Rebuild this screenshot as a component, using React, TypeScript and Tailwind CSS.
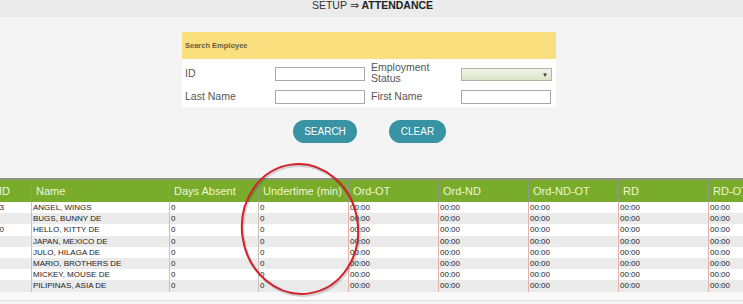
import React from 'react';

const rows = [
  { id: '13', name: 'ANGEL, WINGS' },
  { id: '', name: 'BUGS, BUNNY DE' },
  { id: '10', name: 'HELLO, KITTY DE' },
  { id: '', name: 'JAPAN, MEXICO DE' },
  { id: '', name: 'JULO, HILAGA DE' },
  { id: '', name: 'MARIO, BROTHERS DE' },
  { id: '', name: 'MICKEY, MOUSE DE' },
  { id: '', name: 'PILIPINAS, ASIA DE' },
];

const timeCols = ['Ord-OT', 'Ord-ND', 'Ord-ND-OT', 'RD', 'RD-OT'];

function Field({ className = '' }: { className?: string }) {
  return <div className={`h-[14px] border border-[#a9a9a9] bg-white ${className}`} />;
}

export default function App() {
  return (
    <div className="relative w-[743px] h-[304px] overflow-hidden bg-[#f4f4f4] font-['Liberation_Sans',Arial,sans-serif] text-[#333]">
      {/* breadcrumb */}
      <div className="h-[17px] bg-[#ebebeb] pl-[2px] text-center text-[10.5px] leading-[11px] text-[#333]">
        SETUP ⇒ <b className="text-[#222]">ATTENDANCE</b>
      </div>

      {/* search panel */}
      <div className="ml-[182px] mt-[15px] w-[374px]">
        <div className="h-[27px] bg-[#fadf7e] pl-[3px] text-[7.5px] font-bold leading-[27px] text-[#66603f]">
          Search Employee
        </div>
        <div className="grid h-[48px] grid-cols-[90px_96px_90px_1fr] bg-white pl-[3px] text-[10.5px] text-[#555]">
          <div className="flex items-center pt-[2px]">ID</div>
          <div className="flex items-center pt-[2px]">
            <Field className="w-[90px]" />
          </div>
          <div className="pt-[3px] leading-[11px]">
            Employment
            <br />
            Status
          </div>
          <div className="flex items-center pt-[2px]">
            <div className="relative h-[13px] w-[91px] border border-[#b4b4a4] bg-gradient-to-b from-[#f1f3e8] to-[#dde3c9]">
              <span className="absolute right-[3px] top-[1px] text-[6px] leading-[10px] text-[#333]">▼</span>
            </div>
          </div>
          <div className="flex items-center">Last Name</div>
          <div className="flex items-center">
            <Field className="w-[90px]" />
          </div>
          <div className="flex items-center">First Name</div>
          <div className="flex items-center">
            <Field className="w-[90px]" />
          </div>
        </div>
      </div>

      {/* buttons */}
      <div className="mt-[13px] flex gap-[32px] pl-[293px]">
        <button className="h-[23px] w-[64px] rounded-full bg-[#3893a5] text-[10px] text-white">SEARCH</button>
        <button className="h-[23px] w-[57px] rounded-full bg-[#3893a5] text-[10px] text-white">CLEAR</button>
      </div>

      {/* table */}
      <div className="mt-[35px] ml-[-14px] w-[830px]">
        <div className="flex h-[24px] rounded-tr-[6px] border-t-2 border-[#8d9483] bg-[#7aac2b] text-[11px] leading-[22px] text-[#eef6d8]">
          <div className="w-[45px] shrink-0 pl-[13px]">ID</div>
          <div className="w-[138px] shrink-0 border-l border-[#8f9a86] pl-[4px]">Name</div>
          <div className="w-[89px] shrink-0 border-l border-[#8f9a86] pl-[4px]">Days Absent</div>
          <div className="w-[90px] shrink-0 border-l border-[#8f9a86] pl-[4px]">Undertime (min)</div>
          {timeCols.map((c) => (
            <div key={c} className="w-[90px] shrink-0 border-l border-[#8f9a86] pl-[4px]">
              {c}
            </div>
          ))}
        </div>
        {rows.map((r, i) => (
          <div
            key={r.name}
            className={`flex h-[11.2px] text-[8px] leading-[11px] text-[#222] ${i % 2 ? 'bg-[#ebebeb]' : 'bg-white'}`}
          >
            <div className="w-[45px] shrink-0 pl-[9px]">{r.id}</div>
            <div className="w-[138px] shrink-0 border-l border-[#c9c1bd] pl-[1px]">{r.name}</div>
            <div className="w-[89px] shrink-0 border-l border-[#c9c1bd] pl-[1px]">0</div>
            <div className="w-[90px] shrink-0 border-l border-[#c9c1bd] pl-[1px]">0</div>
            {timeCols.map((c) => (
              <div key={c} className="w-[90px] shrink-0 border-l border-[#e2b2b2] pl-[1px]">
                00:00
              </div>
            ))}
          </div>
        ))}
        <div className="h-[9px] border-b border-[#dcdcdc] bg-[#f9f9f9]" />
      </div>

      {/* red annotation circle */}
      <svg className="pointer-events-none absolute left-0 top-0" width="743" height="304">
        <ellipse
          cx="300"
          cy="229"
          rx="58"
          ry="65"
          fill="none"
          stroke="rgba(0,0,0,0.15)"
          strokeWidth="3"
          transform="translate(1 1.5) rotate(-8 300 229)"
        />
        <ellipse
          cx="300"
          cy="229"
          rx="58"
          ry="65"
          fill="none"
          stroke="#d3212b"
          strokeWidth="2"
          transform="rotate(-8 300 229)"
        />
      </svg>
    </div>
  );
}
